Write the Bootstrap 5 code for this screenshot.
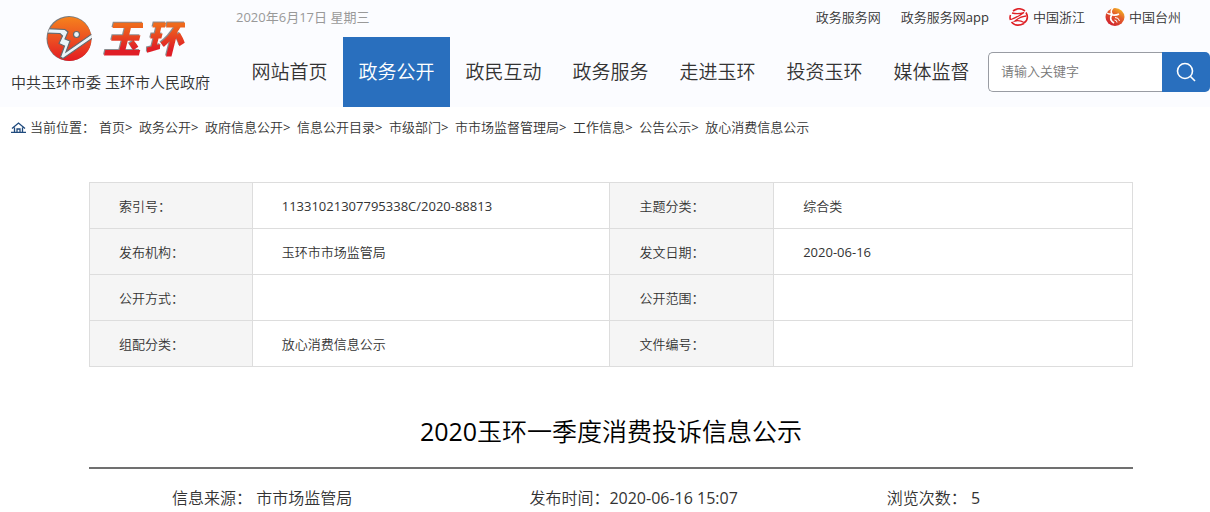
<!DOCTYPE html>
<html lang="zh-CN">
<head>
<meta charset="utf-8">
<meta name="viewport" content="width=device-width, initial-scale=1">
<title>2020玉环一季度消费投诉信息公示</title>
<link href="https://cdn.jsdelivr.net/npm/bootstrap@5.3.0/dist/css/bootstrap.min.css" rel="stylesheet">
<style>
  body { font-family: "Open Sans", "Noto Sans CJK SC", sans-serif; font-size: 13px; line-height: 20px; color: #333; background: #fff; font-weight: 350; }
  a { color: inherit; text-decoration: none; }
  .latin { font-weight: 400; }
  .site-head { background: #fbfcff; }
  .brand-block { width: 236px; padding: 14px 0 0 11px; }
  .brand-art { padding-left: 34px; height: 52px; gap: 9px; }
  .brand-script { display: flex; gap: 4px; font-size: 38px; line-height: 44px; padding-bottom: 4px; font-weight: 900; font-style: italic; filter: drop-shadow(-1px -1px 0 #8b8d90); }
  .brand-script span { background: linear-gradient(#ef6a1c 20%, #e01e26 75%); -webkit-background-clip: text; background-clip: text; color: transparent; padding-right: 2px; }
  .brand-script span + span { margin-left: -2px; }
  .brand-name { font-size: 15px; line-height: 20px; margin-top: 6px; }
  .top-row { height: 37px; padding: 0 29px 3px 0; }
  .top-date { color: #999; }
  .top-links { gap: 20px; }
  .main-nav .nav-link { min-width: 107px; height: 70px; padding: 0 14px; font-size: 19px; line-height: 70px; color: #333; text-align: center; border-radius: 0; white-space: nowrap; }
  .main-nav .nav-link.active { background: #296fbe; color: #fff; }
  .search-box { height: 40px; margin-left: 3px; min-width: 0; }
  .search-box .form-control { font-size: 13px; font-weight: 350; padding: 0 12px; border: 1px solid #999ca3; border-right: 0; border-radius: 5px 0 0 5px; }
  .search-box .form-control::placeholder { color: #777; }
  .search-box .btn { width: 48px; padding: 0; background: #296fbe; border: 0; border-radius: 0 5px 5px 0; }
  .crumb-bar { padding: 10px 11px; }
  .crumb-bar li:not(:last-child)::after { content: ">"; display: inline-block; width: 14px; font-weight: 400; }
  .doc-body { padding: 35px 77px 0 89px; }
  .info-table { table-layout: fixed; border-color: #ddd; color: #333; margin-bottom: 0; }
  .info-table th, .info-table td { height: 46px; padding: 0 29px; vertical-align: middle; font-weight: 350; }
  .info-table > tbody > tr > th { background: #f5f5f5; }
  .doc-title { font-size: 25px; line-height: 36px; color: #000; font-weight: 350; margin: 46px 0 0; padding-bottom: 18px; border-bottom: 2px solid #707070; }
  .doc-meta { display: grid; grid-template-columns: 3fr 3fr 2fr; font-size: 16px; line-height: 24px; padding: 17px 8px 0 83px; }
</style>
</head>
<body>
<header class="site-head d-flex">
  <a href="#" class="brand-block flex-shrink-0 d-block">
    <div class="brand-art d-flex align-items-center">
      <svg width="49" height="50" viewBox="0 0 49 50" aria-hidden="true">
        <defs>
          <linearGradient id="orb" x1="0" y1="0" x2="0" y2="1"><stop offset="0" stop-color="#f5821d"/><stop offset=".5" stop-color="#ec5022"/><stop offset="1" stop-color="#e31a22"/></linearGradient>
          <clipPath id="orbclip"><circle cx="24.500" cy="24" r="22.500"/></clipPath>
        </defs>
        <circle cx="24" cy="23.500" r="22.500" fill="#77797c"/>
        <circle cx="24.500" cy="24" r="22" fill="url(#orb)"/>
        <g clip-path="url(#orbclip)" fill="#eaf5fa" stroke="#63696e" stroke-width="1.200">
          <path d="M0 13.500L20 14.500L23 17L20 24L25 26L21 37L49 17.500V22L18 43.500L15.500 42L19.500 31L14 28.500L17.500 21L15 18.500L0 18Z"/>
          <circle cx="31.500" cy="19.500" r="3"/>
        </g>
      </svg>
      <span class="brand-script"><span>玉</span><span>环</span></span>
    </div>
    <div class="brand-name text-nowrap">中共玉环市委 玉环市人民政府</div>
  </a>
  <div class="flex-grow-1">
    <div class="top-row d-flex align-items-center justify-content-between">
      <span class="top-date latin">2020年6月17日 星期三</span>
      <div class="top-links d-flex align-items-center">
        <a href="#">政务服务网</a>
        <a href="#">政务服务网<span class="latin">app</span></a>
        <a href="#" class="d-flex align-items-center gap-1">
          <svg width="20" height="18" viewBox="0 0 20 18" aria-hidden="true" fill="none" stroke="#de2026"><path d="M4 3Q10-1.500 16 3M17 4.500Q20.500 11 15 15M15 15.500Q7 19.500 2.500 14M1.500 12Q.5 9.500 1.500 7" stroke-width="1.600"/><path d="M3 5Q9 6.500 15 4.500Q9 9 2 11.500M17 8Q11 8.500 6 13Q11 12 15 14.500" stroke-width="1.300"/></svg>
          <span>中国浙江</span></a>
        <a href="#" class="d-flex align-items-center gap-1">
          <svg width="20" height="18" viewBox="0 0 20 18" aria-hidden="true"><defs><linearGradient id="tz" x1="1" y1="0" x2=".3" y2="1"><stop offset="0" stop-color="#f8d51f"/><stop offset=".45" stop-color="#e5622a"/><stop offset="1" stop-color="#cf2030"/></linearGradient></defs><ellipse cx="10" cy="9" rx="9.500" ry="9" fill="url(#tz)"/><g fill="none" stroke="#fff"><path d="M8 0Q5 3 7 6Q4 6.500 2 5" stroke-width="1.500"/><path d="M6 6.500Q10 8 14 6M6.500 7Q4 12 9 15" stroke-width="1.700"/><path d="M10 9.500Q14 9.500 14.500 13M9.500 12Q12 12 12 14.500" stroke-width="1"/></g></svg>
          <span>中国台州</span></a>
      </div>
    </div>
    <div class="d-flex align-items-center">
      <nav class="main-nav nav flex-nowrap" aria-label="主导航">
        <a class="nav-link" href="#">网站首页</a>
        <a class="nav-link active" aria-current="page" href="#">政务公开</a>
        <a class="nav-link" href="#">政民互动</a>
        <a class="nav-link" href="#">政务服务</a>
        <a class="nav-link" href="#">走进玉环</a>
        <a class="nav-link" href="#">投资玉环</a>
        <a class="nav-link" href="#">媒体监督</a>
      </nav>
      <form class="search-box d-flex flex-grow-1">
        <input class="form-control" type="text" placeholder="请输入关键字" aria-label="请输入关键字">
        <button class="btn flex-shrink-0 d-flex align-items-center justify-content-center" type="button" aria-label="搜索">
          <svg width="20" height="20" viewBox="0 0 20 20" fill="none" stroke="#fff" stroke-width="1.600" aria-hidden="true"><circle cx="9" cy="9" r="7.500"/><path d="M14.500 14.500L19 19"/></svg>
        </button>
      </form>
    </div>
  </div>
</header>

<nav class="crumb-bar d-flex align-items-center text-nowrap" aria-label="当前位置">
  <svg width="15" height="12" viewBox="0 0 15 12" fill="none" stroke="#1f4a7d" stroke-width="1.300" class="me-1" aria-hidden="true"><path d="M1 7.500L7.500 2L14 7.500M3.500 6.500V11M11.500 6.500V11M0 11.300H15M6 11V8H9V11"/></svg>
  <span class="me-1">当前位置：</span>
  <ol class="list-unstyled d-flex mb-0">
    <li><a href="#">首页</a></li>
    <li><a href="#">政务公开</a></li>
    <li><a href="#">政府信息公开</a></li>
    <li><a href="#">信息公开目录</a></li>
    <li><a href="#">市级部门</a></li>
    <li><a href="#">市市场监督管理局</a></li>
    <li><a href="#">工作信息</a></li>
    <li><a href="#">公告公示</a></li>
    <li><a href="#">放心消费信息公示</a></li>
  </ol>
</nav>

<main class="doc-body">
  <table class="table table-bordered info-table">
    <colgroup><col style="width:15.6%"><col style="width:34.3%"><col style="width:15.7%"><col></colgroup>
    <tbody>
      <tr><th scope="row">索引号：</th><td><span class="latin">11331021307795338C/2020-88813</span></td><th scope="row">主题分类：</th><td>综合类</td></tr>
      <tr><th scope="row">发布机构：</th><td>玉环市市场监管局</td><th scope="row">发文日期：</th><td><span class="latin">2020-06-16</span></td></tr>
      <tr><th scope="row">公开方式：</th><td></td><th scope="row">公开范围：</th><td></td></tr>
      <tr><th scope="row">组配分类：</th><td>放心消费信息公示</td><th scope="row">文件编号：</th><td></td></tr>
    </tbody>
  </table>
  <h1 class="doc-title text-center"><span class="latin">2020</span>玉环一季度消费投诉信息公示</h1>
  <div class="doc-meta">
    <span>信息来源： 市市场监管局</span>
    <span>发布时间：<span class="latin">2020-06-16 15:07</span></span>
    <span>浏览次数： <span class="latin">5</span></span>
  </div>
</main>
<script src="https://cdn.jsdelivr.net/npm/bootstrap@5.3.0/dist/js/bootstrap.bundle.min.js"></script>
</body>
</html>
